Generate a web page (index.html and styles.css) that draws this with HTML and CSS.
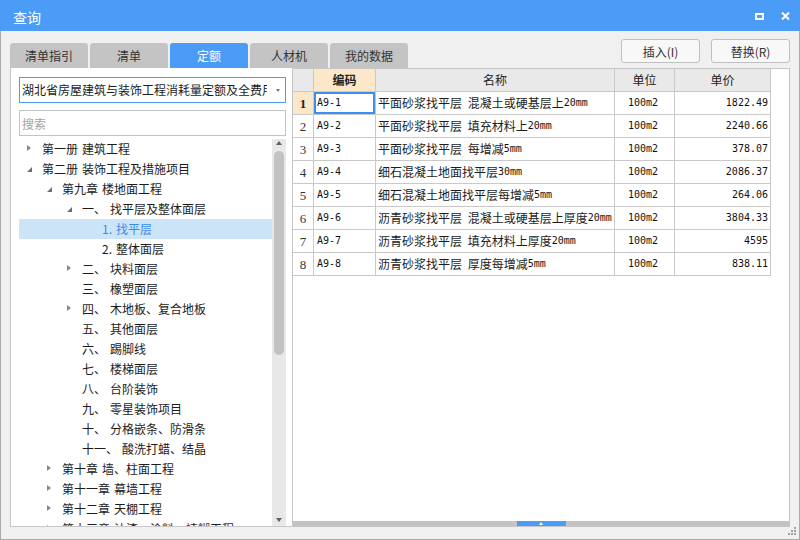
FILE: index.html
```html
<!DOCTYPE html>
<html lang="zh-CN">
<head>
<meta charset="utf-8">
<title>查询</title>
<link rel="stylesheet" href="styles.css">
</head>
<body>
<div class="window">
  <header class="titlebar">
    <span class="title">查询</span>
    <div class="win-ctrls">
      <svg class="ico" width="9" height="7" viewBox="0 0 9 7"><rect x="1" y="1" width="7" height="5" fill="none" stroke="#fff" stroke-width="2"/></svg>
      <svg class="ico" width="9" height="8" viewBox="0 0 9 8"><path d="M1 0.5 L8 7.5 M8 0.5 L1 7.5" stroke="#fff" stroke-width="2" fill="none"/></svg>
    </div>
  </header>

  <div class="body">
    <div class="topbar">
      <nav class="tabs">
        <div class="tab">清单指引</div>
        <div class="tab">清单</div>
        <div class="tab active">定额</div>
        <div class="tab">人材机</div>
        <div class="tab">我的数据</div>
      </nav>
      <div class="actions">
        <button class="btn">插入(I)</button>
        <button class="btn">替换(R)</button>
      </div>
    </div>

    <div class="main">
      <aside class="left">
        <div class="select">
          <span class="select-text">湖北省房屋建筑与装饰工程消耗量定额及全费用基价表</span>
          <span class="caret"></span>
        </div>
        <input class="search" type="text" placeholder="搜索">
        <div class="tree">
          <ul class="tree-rows">
            <li class="row lv0"><span class="arr closed"></span>第一册 建筑工程</li>
            <li class="row lv0"><span class="arr open"></span>第二册 装饰工程及措施项目</li>
            <li class="row lv1"><span class="arr open"></span>第九章 楼地面工程</li>
            <li class="row lv2"><span class="arr open"></span><span class="num">一、</span>找平层及整体面层</li>
            <li class="row lv3 sel"><span class="arr"></span>1. 找平层</li>
            <li class="row lv3"><span class="arr"></span>2. 整体面层</li>
            <li class="row lv2"><span class="arr closed"></span><span class="num">二、</span>块料面层</li>
            <li class="row lv2"><span class="arr"></span><span class="num">三、</span>橡塑面层</li>
            <li class="row lv2"><span class="arr closed"></span><span class="num">四、</span>木地板、复合地板</li>
            <li class="row lv2"><span class="arr"></span><span class="num">五、</span>其他面层</li>
            <li class="row lv2"><span class="arr"></span><span class="num">六、</span>踢脚线</li>
            <li class="row lv2"><span class="arr"></span><span class="num">七、</span>楼梯面层</li>
            <li class="row lv2"><span class="arr"></span><span class="num">八、</span>台阶装饰</li>
            <li class="row lv2"><span class="arr"></span><span class="num">九、</span>零星装饰项目</li>
            <li class="row lv2"><span class="arr"></span><span class="num">十、</span>分格嵌条、防滑条</li>
            <li class="row lv2"><span class="arr"></span><span class="num">十一、</span>酸洗打蜡、结晶</li>
            <li class="row lv1"><span class="arr closed"></span>第十章 墙、柱面工程</li>
            <li class="row lv1"><span class="arr closed"></span>第十一章 幕墙工程</li>
            <li class="row lv1"><span class="arr closed"></span>第十二章 天棚工程</li>
            <li class="row lv1"><span class="arr closed"></span>第十三章 油漆、涂料、裱糊工程</li>
          </ul>
          <div class="vscroll">
            <span class="sarr up"></span>
            <span class="thumb"></span>
            <span class="sarr down"></span>
          </div>
        </div>
      </aside>

      <section class="grid">
        <div class="gtable">
          <div class="c hd"></div>
          <div class="c hd key">编码</div>
          <div class="c hd">名称</div>
          <div class="c hd">单位</div>
          <div class="c hd">单价</div>

          <div class="c rn cur">1</div>
          <div class="c code focus"><span class="m">A9-1</span></div>
          <div class="c name">平面砂浆找平层 混凝土或硬基层上<span class="m">20mm</span></div>
          <div class="c unit"><span class="m">100m2</span></div>
          <div class="c price"><span class="m">1822.49</span></div>

          <div class="c rn">2</div>
          <div class="c code"><span class="m">A9-2</span></div>
          <div class="c name">平面砂浆找平层 填充材料上<span class="m">20mm</span></div>
          <div class="c unit"><span class="m">100m2</span></div>
          <div class="c price"><span class="m">2240.66</span></div>

          <div class="c rn">3</div>
          <div class="c code"><span class="m">A9-3</span></div>
          <div class="c name">平面砂浆找平层 每增减<span class="m">5mm</span></div>
          <div class="c unit"><span class="m">100m2</span></div>
          <div class="c price"><span class="m">378.07</span></div>

          <div class="c rn">4</div>
          <div class="c code"><span class="m">A9-4</span></div>
          <div class="c name">细石混凝土地面找平层<span class="m">30mm</span></div>
          <div class="c unit"><span class="m">100m2</span></div>
          <div class="c price"><span class="m">2086.37</span></div>

          <div class="c rn">5</div>
          <div class="c code"><span class="m">A9-5</span></div>
          <div class="c name">细石混凝土地面找平层每增减<span class="m">5mm</span></div>
          <div class="c unit"><span class="m">100m2</span></div>
          <div class="c price"><span class="m">264.06</span></div>

          <div class="c rn">6</div>
          <div class="c code"><span class="m">A9-6</span></div>
          <div class="c name">沥青砂浆找平层 混凝土或硬基层上厚度<span class="m">20mm</span></div>
          <div class="c unit"><span class="m">100m2</span></div>
          <div class="c price"><span class="m">3804.33</span></div>

          <div class="c rn">7</div>
          <div class="c code"><span class="m">A9-7</span></div>
          <div class="c name">沥青砂浆找平层 填充材料上厚度<span class="m">20mm</span></div>
          <div class="c unit"><span class="m">100m2</span></div>
          <div class="c price"><span class="m">4595</span></div>

          <div class="c rn">8</div>
          <div class="c code"><span class="m">A9-8</span></div>
          <div class="c name">沥青砂浆找平层 厚度每增减<span class="m">5mm</span></div>
          <div class="c unit"><span class="m">100m2</span></div>
          <div class="c price"><span class="m">838.11</span></div>
        </div>
        <div class="splitter"><span class="handle"><span class="tri"></span></span></div>
      </section>
    </div>
  </div>

  <svg class="grip" width="9" height="9" viewBox="0 0 9 9">
    <rect x="6" y="1" width="2" height="2" fill="#a3a3a3"/>
    <rect x="3" y="4" width="2" height="2" fill="#a3a3a3"/>
    <rect x="6" y="4" width="2" height="2" fill="#a3a3a3"/>
    <rect x="0" y="7" width="2" height="2" fill="#a3a3a3"/>
    <rect x="3" y="7" width="2" height="2" fill="#a3a3a3"/>
    <rect x="6" y="7" width="2" height="2" fill="#a3a3a3"/>
  </svg>
</div>
</body>
</html>
```

FILE: styles.css
```css
* { box-sizing: border-box; margin: 0; padding: 0; }
html, body { width: 800px; height: 540px; overflow: hidden; }
body {
  font-family: "Noto Sans CJK SC", "Noto Sans", sans-serif;
  font-size: 12px;
  color: #1c1c1c;
  background: #f0f0f0;
}
.window {
  position: relative;
  width: 800px;
  height: 540px;
  display: flex;
  flex-direction: column;
}

/* title bar */
.titlebar {
  flex: none;
  height: 31px;
  background: #4a9cf6;
  color: #fff;
  display: flex;
  align-items: center;
  padding: 0 10px 0 13px;
}
.title { font-size: 14px; line-height: 1; margin-top: 2px; }
.win-ctrls { margin-left: auto; display: flex; align-items: center; gap: 17px; margin-top: 1px; }
.ico { display: block; }

/* body */
.body {
  flex: 1;
  display: flex;
  flex-direction: column;
  border: 1px solid #ababab;
  border-top: 0;
  padding: 0 9px 12px;
  min-height: 0;
}
.topbar { flex: none; height: 37px; display: flex; }
.tabs { display: flex; gap: 2px; align-self: flex-end; }
.tab {
  width: 78px;
  height: 25px;
  background: #c4c4c4;
  color: #333;
  border-radius: 3px 3px 0 0;
  display: flex;
  align-items: center;
  justify-content: center;
  line-height: 1;
}
.tab.active { background: #4a9cf6; color: #fff; }
.actions { margin-left: auto; display: flex; gap: 11px; padding-top: 8px; align-items: flex-start; }
.btn {
  width: 79px;
  height: 24px;
  border: 1px solid #c0c0c0;
  border-radius: 3px;
  background: #f8f8f8;
  font: inherit;
  color: #333;
  display: flex;
  align-items: center;
  justify-content: center;
}

.main { flex: 1; display: flex; min-height: 0; }

/* left panel */
.left {
  flex: none;
  width: 282px;
  background: #fff;
  border-left: 1px solid #c8c8c8;
  border-bottom: 1px solid #c8c8c8;
  padding: 9px 6px 0 8px;
  display: flex;
  flex-direction: column;
  min-height: 0;
}
.select {
  flex: none;
  height: 26px;
  border: 1px solid #4a9cf6;
  display: flex;
  align-items: center;
  padding-left: 2px;
}
.select-text { flex: 1; overflow: hidden; white-space: nowrap; line-height: 1; }
.caret {
  flex: none;
  width: 0; height: 0;
  border-left: 2.5px solid transparent;
  border-right: 2.5px solid transparent;
  border-top: 3px solid #7a7a7a;
  margin: 0 5px 0 9px;
}
.search {
  flex: none;
  margin-top: 7px;
  height: 26px;
  border: 1px solid #c3c3c3;
  padding-left: 2px;
  font: inherit;
  color: #333;
  outline: none;
  background: #fff;
}
.search::placeholder { color: #a3a3a3; }

.tree { flex: 1; margin-top: 3px; display: flex; min-height: 0; overflow: hidden; }
.tree-rows { flex: 1; list-style: none; overflow: hidden; }
.row {
  height: 20px;
  display: flex;
  align-items: center;
  white-space: nowrap;
  word-spacing: 1.3px;
  line-height: 1;
}
.row.lv0 { padding-left: 8px; }
.row.lv1 { padding-left: 28px; }
.row.lv2 { padding-left: 48px; }
.row.lv3 { padding-left: 68px; }
.row.sel { background: #cce4f8; color: #3b8de8; }
.arr { flex: none; width: 15px; height: 8px; position: relative; }
.arr.closed::before {
  content: "";
  position: absolute;
  left: 0; top: 0;
  border-left: 4px solid #8a8a8a;
  border-top: 3.5px solid transparent;
  border-bottom: 3.5px solid transparent;
}
.arr.open::before {
  content: "";
  position: absolute;
  left: 0; top: 2px;
  border-left: 5px solid transparent;
  border-bottom: 5px solid #6e6e6e;
}
.num { margin-right: 4px; }

.vscroll {
  flex: none;
  width: 14px;
  background: #e8e8e8;
  display: flex;
  flex-direction: column;
  align-items: center;
}
.sarr { width: 0; height: 0; border-left: 3.5px solid transparent; border-right: 3.5px solid transparent; }
.sarr.up { border-bottom: 4px solid #5f5f5f; margin-top: 2px; }
.sarr.down { border-top: 4px solid #5f5f5f; margin-top: auto; margin-bottom: 4px; }
.thumb { width: 10px; height: 204px; margin-top: 6px; background: #c2c2c2; border-radius: 5px; }

/* grid */
.grid {
  flex: 1;
  border: 1px solid #c6c6c6;
  background: #fff;
  display: flex;
  flex-direction: column;
  min-width: 0;
}
.gtable {
  display: grid;
  grid-template-columns: 21px 62px 239px 60px 96px;
  grid-auto-rows: 23px;
}
.c {
  border-right: 1px solid #c9c9c9;
  border-bottom: 1px solid #c9c9c9;
  display: flex;
  align-items: center;
  white-space: nowrap;
  overflow: hidden;
  line-height: 1;
  position: relative;
}
.c.hd { background: #e9e9e9; justify-content: center; color: #222; }
.c.hd.key { background: #fde7c9; font-weight: bold; }
.c.rn { justify-content: center; font-family: "Liberation Serif", serif; font-size: 13px; color: #333; }
.c.rn.cur { background: #fde7c9; font-weight: bold; color: #222; }
.c.code { padding-left: 3px; }
.c.name { padding-left: 2px; word-spacing: 3px; }
.c.unit { justify-content: center; padding-right: 3px; }
.c.price { justify-content: flex-end; padding-right: 2px; }
.c.focus::after {
  content: "";
  position: absolute;
  inset: 0;
  border: 2px solid #3d8ef2;
}
.m {
  font-family: "DejaVu Sans Mono", "Liberation Mono", monospace;
  font-size: 10px;
  word-spacing: 0;
  color: #111;
}

.splitter {
  margin-top: auto;
  height: 5px;
  background: #c3c3c3;
  display: flex;
  justify-content: center;
}
.handle {
  width: 49px;
  height: 5px;
  background: #4a9cf6;
  display: flex;
  justify-content: center;
  align-items: flex-end;
  padding-bottom: 1px;
}
.tri {
  width: 0; height: 0;
  border-left: 2.5px solid transparent;
  border-right: 2.5px solid transparent;
  border-bottom: 3px solid #fff;
}

.grip { position: absolute; left: 788px; top: 526px; }
```
